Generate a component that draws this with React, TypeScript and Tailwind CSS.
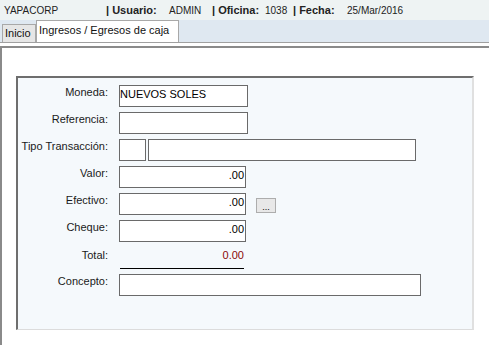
export default function App() {
  const font = { fontFamily: '"Liberation Sans", Arial, sans-serif' }

  const Row = ({ label, children }: { label: string; children: React.ReactNode }) => (
    <div className="flex h-[22px] items-start">
      <div className="w-[90px] pt-[1px] text-right text-[11px] leading-[13px] text-[#1a1a1a]">{label}</div>
      <div className="ml-[11px] flex items-start">{children}</div>
    </div>
  )

  const Box = ({ w, value, right }: { w: string; value?: string; right?: boolean }) => (
    <div
      className={`${w} h-[22px] border border-[#6a6a6a] bg-white pt-[2px] text-[11px] leading-[13px] text-black ${
        right ? "pr-[1px] text-right" : "pl-0"
      }`}
    >
      {value}
    </div>
  )

  return (
    <div className="h-[345px] w-[489px] overflow-hidden bg-white" style={font}>
      {/* top info bar */}
      <div className="flex h-[20px] items-center bg-[#eef3f3] text-[#222]">
        <span className="w-[106px] pl-[4px] text-[10px]">YAPACORP</span>
        <span className="w-[63px] text-[11px] font-bold">| Usuario:</span>
        <span className="w-[43px] text-[10px]">ADMIN</span>
        <span className="w-[53px] text-[11px] font-bold">| Oficina:</span>
        <span className="w-[28px] text-[10px]">1038</span>
        <span className="w-[54px] text-[11px] font-bold">| Fecha:</span>
        <span className="text-[10px]">25/Mar/2016</span>
      </div>

      {/* tabs */}
      <div className="flex h-[23px] items-end border-b border-[#a0a0a0] bg-[#dfe8f1] pl-[2px]">
        <div className="flex h-[18px] w-[34px] items-center border border-b-0 border-[#a8a8a8] bg-[#e6e6e6] pl-[2px] text-[11px] text-[#111]">
          Inicio
        </div>
        <div className="flex h-[22px] w-[143px] items-start border border-b-0 border-[#a8a8a8] bg-white pl-[2px] pt-[3px] text-[11px] leading-[13px] text-[#111]">
          Ingresos / Egresos de caja
        </div>
      </div>

      {/* main area */}
      <div className="mt-[3px] h-[300px] border-l-2 border-t-2 border-[#8a8a8a]">
        <div className="ml-[14px] mt-[28px] h-[254px] w-[458px] border-b border-l-2 border-r-2 border-t-2 border-b-[#dcdcdc] border-l-[#6e6e6e] border-r-[#e0e0e0] border-t-[#6e6e6e] bg-[#f5f9fc] pt-[7px]">
          <div className="flex flex-col gap-[5px]">
            <Row label="Moneda:">
              <Box w="w-[129px]" value="NUEVOS SOLES" />
            </Row>
            <Row label="Referencia:">
              <Box w="w-[129px]" />
            </Row>
            <Row label="Tipo Transacción:">
              <Box w="w-[27px]" />
              <div className="ml-[2px]">
                <Box w="w-[268px]" />
              </div>
            </Row>
            <Row label="Valor:">
              <Box w="w-[127px]" value=".00" right />
            </Row>
            <Row label="Efectivo:">
              <Box w="w-[127px]" value=".00" right />
              <div className="ml-[10px] mt-[5px] flex h-[15px] w-[20px] items-end justify-center border border-[#adadad] bg-[#e8e8e8] text-[9px] leading-[10px] text-black">
                ...
              </div>
            </Row>
            <Row label="Cheque:">
              <Box w="w-[127px]" value=".00" right />
            </Row>
          </div>

          <div className="mt-[7px] flex h-[13px] items-start text-[11px] leading-[13px]">
            <div className="w-[90px] text-right text-[#1a1a1a]">Total:</div>
            <div className="ml-[11px] w-[127px] pr-[2px] text-right text-[#8b0a0a]">0.00</div>
          </div>
          <div className="ml-[102px] mt-[6px] h-[1px] w-[124px] bg-black" />

          <div className="mt-[5px]">
            <Row label="Concepto:">
              <Box w="w-[302px]" />
            </Row>
          </div>
        </div>
      </div>
    </div>
  )
}
